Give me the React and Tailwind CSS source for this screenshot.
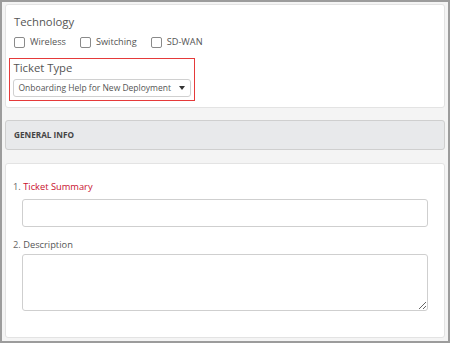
export default function App() {
  return (
    <div
      className="w-[450px] h-[343px] border-2 border-[#9c9c9c] bg-[#f4f4f4] text-[#555]"
      style={{ fontFamily: '"Open Sans", sans-serif' }}
    >
      <div className="mx-[3px] mt-[2px] h-[104px] bg-white border border-[#e3e3e3] rounded-[3px] pl-[3px] pt-[9px]">
        <div className="ml-[5px]">
          <div className="text-[11.3px] leading-[16px] text-[#555]">Technology</div>
          <div className="mt-[4px] flex items-center h-[16px] text-[9.2px] text-[#555]">
            <span className="w-[11px] h-[11px] border border-[#8a8a8a] rounded-[2px] bg-white" />
            <span className="ml-[5px]">Wireless</span>
            <span className="ml-[14px] w-[11px] h-[11px] border border-[#8a8a8a] rounded-[2px] bg-white" />
            <span className="ml-[5px]">Switching</span>
            <span className="ml-[14px] w-[11px] h-[11px] border border-[#8a8a8a] rounded-[2px] bg-white" />
            <span className="ml-[5px]">SD-WAN</span>
          </div>
        </div>
        <div className="mt-[8px] w-[186px] h-[43px] border-[1.5px] border-[#e53a3a] pl-[2.5px] pt-[1px]">
          <div className="ml-[1px] text-[11.3px] leading-[16px] text-[#555]">Ticket Type</div>
          <div className="mt-[3px] w-[178px] h-[18px] border border-[#d0d0d0] rounded-[3px] flex items-center pl-[5px] pr-[5px] text-[8.5px] text-[#555] whitespace-nowrap">
            <span className="flex-1">Onboarding Help for New Deployment</span>
            <span className="w-0 h-0 border-l-[3.5px] border-r-[3.5px] border-t-[4px] border-l-transparent border-r-transparent border-t-[#333]" />
          </div>
        </div>
      </div>

      <div className="mx-[3px] mt-[12px] h-[30px] bg-[#e8e9eb] border border-[#cfcfcf] rounded-[3px] flex items-center pl-[8px] text-[8.2px] font-bold text-[#444]">
        GENERAL INFO
      </div>

      <div className="mx-[3px] mt-[13px] h-[175px] bg-white border border-[#e3e3e3] rounded-[3px] pl-[7px] pt-[16px]">
        <div className="text-[9.3px] leading-[14px]">
          <span className="text-[#666]">1. </span>
          <span className="text-[#c8102e]">Ticket Summary</span>
        </div>
        <div className="mt-[5px] ml-[9px] w-[406px] h-[28px] border border-[#cfcfcf] rounded-[3px]" />
        <div className="mt-[11px] text-[9.3px] leading-[14px]">
          <span className="text-[#666]">2. </span>
          <span className="text-[#555]">Description</span>
        </div>
        <textarea
          className="block mt-[2px] ml-[9px] w-[406px] h-[57px] border border-[#cfcfcf] rounded-[3px] outline-none"
          defaultValue=""
        />
      </div>
    </div>
  );
}
